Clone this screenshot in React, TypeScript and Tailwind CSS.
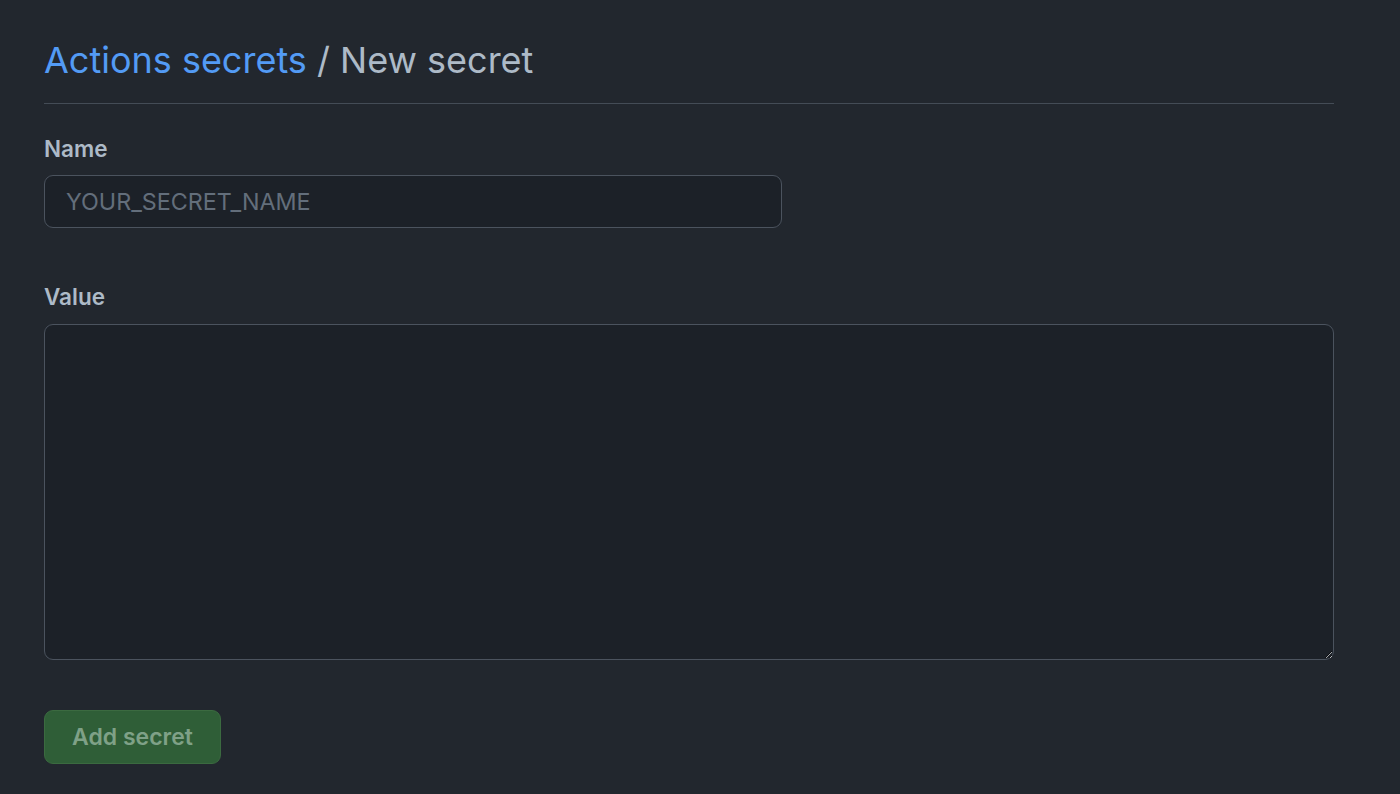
import React from 'react';

export default function App() {
  return (
    <div className="min-h-[794px] w-full bg-[#22272e] font-['Inter','Liberation_Sans',sans-serif] text-[#adbac7]">
      <div className="pl-[44px] pr-[66px] pt-[36px]">
        {/* Header */}
        <div className="border-b border-[#444c56] pb-[19px]">
          <h1 className="text-[36px] font-normal leading-[48px]">
            <a className="text-[#539bf5]">Actions secrets</a>
            <span className="text-[#adbac7]"> / New secret</span>
          </h1>
        </div>

        <form className="pt-[31px]">
          <label className="block text-[22.5px] font-semibold leading-[28px] text-[#adbac7]">Name</label>
          <input
            placeholder="YOUR_SECRET_NAME"
            className="mt-[12px] block h-[53px] w-[738px] rounded-[9px] border border-[#4b535e] bg-[#1c2128] px-[21px] text-[23.3px] text-[#adbac7] placeholder:text-[#636e7b] outline-none"
          />

          <label className="mt-[55px] block text-[22.5px] font-semibold leading-[28px] text-[#adbac7]">Value</label>
          <textarea
            className="mt-[13px] block h-[336px] w-full resize-y rounded-[9px] border border-[#4b535e] bg-[#1c2128] px-[21px] py-[12px] text-[23px] text-[#adbac7] outline-none"
          />

          <button
            type="button"
            disabled
            className="mt-[50px] h-[54px] w-[177px] rounded-[9px] border border-[#3b6a40] bg-[#2f5e37] text-[23px] font-semibold text-[#7fa187]"
          >
            Add secret
          </button>
        </form>
      </div>
    </div>
  );
}
